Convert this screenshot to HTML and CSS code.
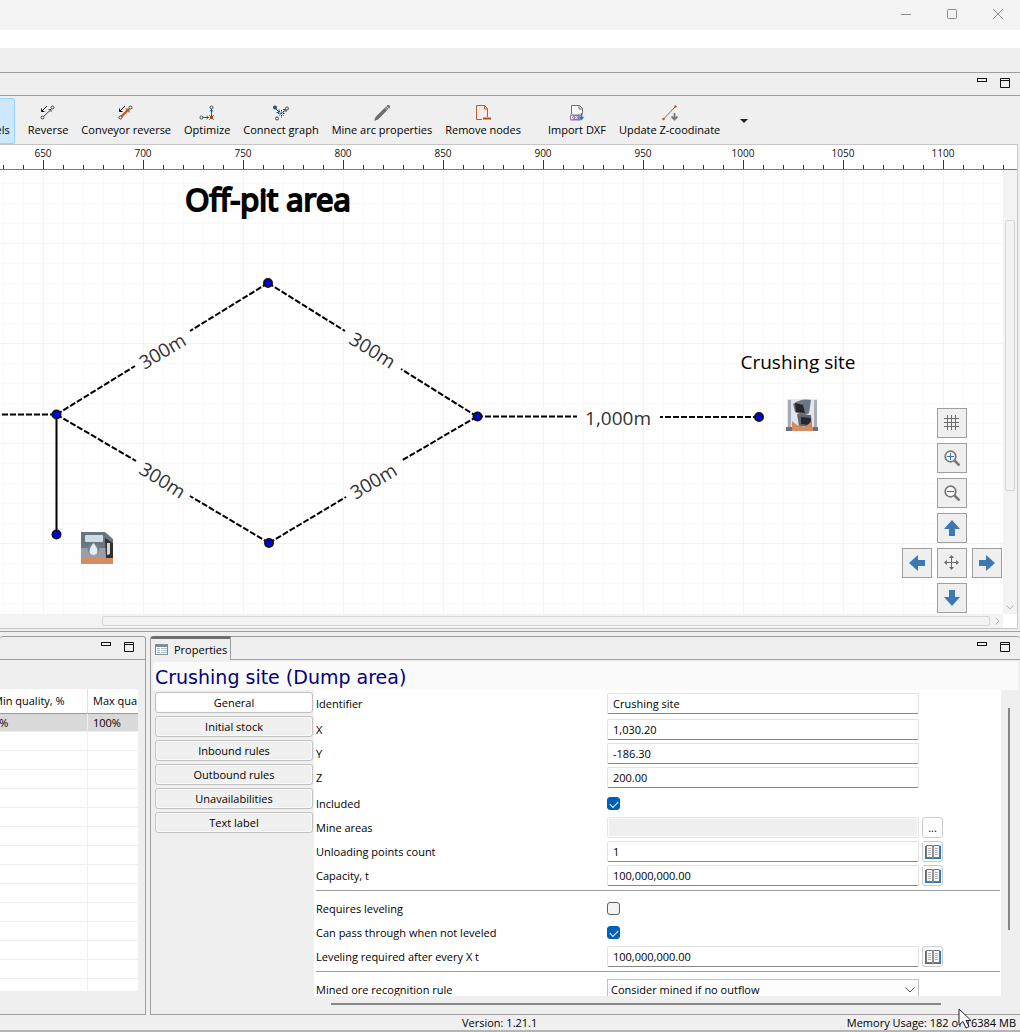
FILE: index.html
```
<!DOCTYPE html>
<html lang="en">
<head>
<meta charset="utf-8">
<title>Mine model editor</title>
<link rel="stylesheet" href="styles.css">
</head>
<body>
<header class="titlebar">
  <button class="win-btn" aria-label="Minimize"><svg width="12" height="12"><path d="M1 6.500h10" /></svg></button>
  <button class="win-btn" aria-label="Maximize"><svg width="12" height="12"><rect x="1.500" y="1.500" width="9" height="9" rx="1"/></svg></button>
  <button class="win-btn" aria-label="Close"><svg width="12" height="12"><path d="M1 1l10 10M11 1L1 11"/></svg></button>
</header>
<div class="menubar"></div>
<div class="coolbar"></div>

<main class="workbench">
<section class="part">
  <div class="part-head">
    <button class="part-btn" aria-label="Minimize view"><svg width="11" height="11"><rect x=".5" y="1.500" width="9" height="3"/></svg></button>
    <button class="part-btn" aria-label="Maximize view"><svg width="11" height="11"><path d="M.5 1.500h9v9h-9zM.5 3.500h9"/></svg></button>
  </div>
  <div class="toolbar">
    <button class="tool tool-on"><svg class="icon" viewBox="0 0 16 16"></svg>Labels</button>
    <button class="tool"><svg class="icon" viewBox="0 0 16 16"><path d="M3.500 11.500L11 4.500M8.500 4.500H11V7" stroke="#1c5586"/><path d="M7 1L1.500 6.500M1.500 3.500v3h3" stroke="#111"/><circle cx="2.500" cy="12.500" r="1.500" fill="#efefef" stroke="#444"/><circle cx="12.500" cy="2.500" r="1.500" fill="#efefef" stroke="#444"/></svg>Reverse</button>
    <button class="tool"><svg class="icon" viewBox="0 0 16 16"><path d="M3.500 11.500L10 5" stroke="#c05a1a" stroke-width="2.400"/><path d="M7 3.500h4.500V8z" fill="#c05a1a"/><path d="M7 1L1.500 6.500M1.500 3.500v3h3" stroke="#111"/><circle cx="2.500" cy="12.500" r="1.500" fill="#efefef" stroke="#444"/><circle cx="12.500" cy="2.500" r="1.500" fill="#efefef" stroke="#444"/></svg>Conveyor reverse</button>
    <button class="tool"><svg class="icon" viewBox="0 0 16 16"><path d="M4 12.500h6M12.500 4v7M11 6.500l1.500-2 1.500 2M7.500 11l2 1.500-2 1.500" stroke="#1c5586"/><path d="M10 10l5 5M15 10l-5 5" stroke="#c05a1a"/><rect x="11" y="11" width="3" height="3" fill="#9c4a18"/><circle cx="2.500" cy="12.500" r="1.500" fill="#efefef" stroke="#444"/><circle cx="12.500" cy="2.500" r="1.500" fill="#efefef" stroke="#444"/></svg>Optimize</button>
    <button class="tool"><svg class="icon" viewBox="0 0 16 16"><circle cx="2" cy="2.500" r="2" fill="#1c5586"/><path d="M3 4l3 3M6 4.500v3H3.500M9.500 8l3-3M10 4.500h3V7" stroke="#1c5586"/><path d="M8.500 5v8M5 8.500h7M6 6l5 5M11 6l-5 5" stroke="#333" stroke-dasharray="1.500 1"/><circle cx="4" cy="13.500" r="1.500" fill="#efefef" stroke="#444"/><circle cx="14" cy="3.500" r="1.500" fill="#efefef" stroke="#444"/></svg>Connect graph</button>
    <button class="tool"><svg class="icon" viewBox="0 0 16 16"><path d="M0 16l1.500-4L12 1.500 14.500 4 4 14.500z" fill="#6b6f72"/><path d="M12.500 1l1-1q1.500-.5 2.500 1t-.5 2l-.5.500z" fill="#6b6f72"/><path d="M11 2.500L13.500 5" stroke="#efefef" stroke-width=".7"/></svg>Mine arc properties</button>
    <button class="tool"><svg class="icon" viewBox="0 0 16 16"><path d="M1.500.5h8l3 3v11h-11z" fill="#f7e9ec" stroke="#b5602f"/><path d="M9.500.5v3.500h3" stroke="#b5602f"/><path d="M7 12h9v3H7z" fill="#efefef"/><path d="M8 13.500h8" stroke="#b5530f" stroke-width="2"/></svg>Remove nodes</button>
    <span class="tool-gap"></span>
    <button class="tool"><svg class="icon" viewBox="0 0 16 16"><path d="M2.500 9V.5h8l3 3V9" fill="#fafafa" stroke="#707070"/><path d="M10 .5V4h3.500" stroke="#707070"/><rect x="1" y="9.500" width="11" height="6" rx="1" fill="#9073a8"/><path d="M2.500 11v3q2 0 2-1.500T2.500 11M6 11l2.500 3M8.500 11L6 14" stroke="#fff" stroke-width=".9"/><path d="M13.500 8v4h2l-3 3.500-3-3.500h2V8z" fill="#2e73b4" stroke="#efefef" stroke-width=".3"/></svg>Import DXF</button>
    <button class="tool"><svg class="icon" viewBox="0 0 16 16"><path d="M1.500 14L13 2" stroke="#777"/><circle cx="1.500" cy="14" r="1.300" fill="#b5602f"/><circle cx="13.500" cy="1.500" r="1.300" fill="#b5602f"/><path d="M12.500 8v6M9.500 11.500l3 3 3-3" stroke="#777" stroke-width="1.800"/></svg>Update Z-coodinate</button>
    <button class="tool-more" aria-label="More tools"><svg width="8" height="5"><path d="M0 0h8L4 4z" fill="#222"/></svg></button>
  </div>

  <div class="editor">
    <svg class="ruler" height="25">
      <defs>
        <pattern id="minor" width="20" height="25" patternUnits="userSpaceOnUse" x="3"><path d="M.5 20v5" stroke="#333"/></pattern>
        <pattern id="major" width="100" height="25" patternUnits="userSpaceOnUse" x="43"><path d="M.5 15v10" stroke="#333"/></pattern>
      </defs>
      <rect width="100%" height="25" fill="url(#minor)"/>
      <rect width="100%" height="25" fill="url(#major)"/>
      <path d="M0 24.500h4000" stroke="#777"/>
      <g class="ruler-text">
        <text x="43" y="12">650</text><text x="143" y="12">700</text><text x="243" y="12">750</text><text x="343" y="12">800</text><text x="443" y="12">850</text><text x="543" y="12">900</text><text x="643" y="12">950</text><text x="743" y="12">1000</text><text x="843" y="12">1050</text><text x="943" y="12">1100</text>
      </g>
    </svg>
    <div class="canvas">
      <svg class="scene">
        <defs>
          <pattern id="grid" width="20" height="20" patternUnits="userSpaceOnUse" x="3" y="13"><path d="M.5 0v20M0 .5h20" stroke="#f9f9f9"/></pattern>
          <pattern id="grid5" width="100" height="100" patternUnits="userSpaceOnUse" x="43" y="73"><path d="M.5 0v100M0 .5h100" stroke="#f3f3f3"/></pattern>
        </defs>
        <rect width="100%" height="100%" fill="url(#grid)"/>
        <rect width="100%" height="100%" fill="url(#grid5)"/>
        <g transform="translate(0 -170)">
          <path class="arc" d="M56 414.500H-8M56.500 414.500L135 366M268 283L190 331M268 283L345 331M477 416.500L401 369M56.500 414.500L136 461M269 543L190 496M269 543L346 497M477 416.500L401 461M477 416.500H577M759 417H660"/>
          <path class="arc solid" d="M56.500 414V534"/>
          <g class="node"><circle cx="56.500" cy="414.500" r="4"/><circle cx="268" cy="283" r="4"/><circle cx="477.500" cy="416.500" r="4"/><circle cx="269" cy="543" r="4"/><circle cx="56.500" cy="534.500" r="4"/><circle cx="759" cy="417" r="4"/></g>
          <g class="arc-text">
            <text transform="translate(166 357) rotate(-31)">300m</text>
            <text transform="translate(369 356) rotate(32)">300m</text>
            <text transform="translate(159 486) rotate(32)">300m</text>
            <text transform="translate(377 487) rotate(-31)">300m</text>
            <text x="618" y="425">1,000m</text>
          </g>
          <text class="area-title" x="268" y="211">Off-pit area</text>
          <text class="site-title" x="798" y="369">Crushing site</text>
          <g transform="translate(81 532)">
            <path d="M0 0h24l8 7v19H0z" fill="#69757f"/><path d="M0 16h25v10H0z" fill="#989fa6"/><path d="M0 26h32v6H0z" fill="#d58c62"/>
            <rect x="4" y="3" width="18" height="7" rx="1" fill="#cfdbe6"/><circle cx="12.500" cy="17" r="6" fill="#75818b"/><path d="M12.500 11q4 5 4 8a4 4 0 0 1-8 0q0-3 4-8z" fill="#e2eef5"/>
            <path d="M24 6l8 5v15h-7z" fill="#34302f"/><path d="M26 11h3v11l-3 1z" fill="#d8d8d8"/><path d="M25 0h7v5z" fill="#fefefe"/>
          </g>
          <g transform="translate(786 399)">
            <path d="M1 0h30v32H1z" fill="#e3e6ea"/><path d="M2 1h3v29H2zM28 1h3v29h-3z" fill="#a5aeb8"/>
            <path d="M7 5q8-6 18-4l-2 13-6 3-8-4z" fill="#6b7683"/><path d="M9 4l8 2 2 8-9-1z" fill="#26262a"/><path d="M11 15l14 1 1 12-13-1z" fill="#5d6873"/><path d="M15 18l10 1-1 7-9-1z" fill="#28262a"/>
            <path d="M6 22l5 4 8 2 6-5 3 9H6z" fill="#d58c62"/><path d="M0 28h6v4H0zM27 28h5v4h-5z" fill="#68727d"/>
          </g>
        </g>
      </svg>
      <div class="nav">
        <button class="nav-btn n-mid" aria-label="Grid"><svg width="16" height="16"><path d="M3.500 0v15M7.500 0v15M11.500 0v15M0 3.500h15M0 7.500h15M0 11.500h15" stroke="#6c6c6c"/></svg></button>
        <button class="nav-btn n-mid" aria-label="Zoom in"><svg width="16" height="16"><circle cx="6.500" cy="6.500" r="5.300" fill="#fafafa" stroke="#777" stroke-width="1.700"/><path d="M10.500 10.500l5 5" stroke="#777" stroke-width="2.500"/><path d="M6.500 3v7M3 6.500h7" stroke="#2e73b4"/></svg></button>
        <button class="nav-btn n-mid" aria-label="Zoom out"><svg width="16" height="16"><circle cx="6.500" cy="6.500" r="5.300" fill="#fafafa" stroke="#777" stroke-width="1.700"/><path d="M10.500 10.500l5 5" stroke="#777" stroke-width="2.500"/><path d="M3 6.500h7" stroke="#2e73b4"/></svg></button>
        <button class="nav-btn n-mid" aria-label="Up"><svg width="16" height="16"><path d="M8 0l8 9h-5v7H5V9H0z" fill="#3c78b4"/></svg></button>
        <button class="nav-btn n-left" aria-label="Left"><svg width="16" height="16"><path d="M0 8l9-8v5h7v6H9v5z" fill="#3c78b4"/></svg></button>
        <button class="nav-btn" aria-label="Fit"><svg width="16" height="16"><path d="M7.500 2v11M2 7.500h11" stroke="#6c6c6c"/><path d="M7.500 0L10 3H5zM7.500 15L10 12H5zM0 7.500L3 5v5zM15 7.500L12 5v5z" fill="#6c6c6c"/></svg></button>
        <button class="nav-btn" aria-label="Right"><svg width="16" height="16"><path d="M16 8L7 0v5H0v6h7v5z" fill="#3c78b4"/></svg></button>
        <button class="nav-btn n-mid" aria-label="Down"><svg width="16" height="16"><path d="M8 16l8-9h-5V0H5v7H0z" fill="#3c78b4"/></svg></button>
      </div>
    </div>
    <div class="vbar"><div class="vthumb"></div><svg width="8" height="5"><path d="M.5.5L4 4 7.500.5"/></svg></div>
    <div class="hbar"><div class="hthumb"></div><svg width="5" height="8"><path d="M.5.5L4 4 .5 7.500"/></svg></div>
  </div>
</section>

<div class="lower">
  <section class="pane table-pane">
    <div class="pane-head">
      <button class="part-btn" aria-label="Minimize view"><svg width="11" height="11"><rect x=".5" y="1.500" width="9" height="3"/></svg></button>
      <button class="part-btn" aria-label="Maximize view"><svg width="11" height="11"><path d="M.5 1.500h9v9h-9zM.5 3.500h9"/></svg></button>
    </div>
    <div class="table-clip">
      <table class="quality">
        <thead><tr><th>Min quality, %</th><th>Max quality, %</th></tr></thead>
        <tbody>
          <tr class="picked"><td>0%</td><td>100%</td></tr>
          <tr><td></td><td></td></tr><tr><td></td><td></td></tr><tr><td></td><td></td></tr><tr><td></td><td></td></tr><tr><td></td><td></td></tr>
          <tr><td></td><td></td></tr><tr><td></td><td></td></tr><tr><td></td><td></td></tr><tr><td></td><td></td></tr><tr><td></td><td></td></tr>
          <tr><td></td><td></td></tr><tr><td></td><td></td></tr><tr><td></td><td></td></tr><tr><td></td><td></td></tr>
        </tbody>
      </table>
    </div>
  </section>

  <section class="pane props">
    <div class="pane-head">
      <div class="tab"><svg width="14" height="12"><rect x=".5" y=".5" width="12" height="10" fill="#fff" stroke="#7d8b99"/><path d="M1 2h12" stroke="#7d8b99" stroke-width="2"/><path d="M2 4.500h3M2 6.500h3M2 8.500h3" stroke="#9db4c4"/><path d="M6 4.500h6M6 6.500h6M6 8.500h6" stroke="#aabecb"/></svg>Properties</div>
      <button class="part-btn" aria-label="Minimize view"><svg width="11" height="11"><rect x=".5" y="1.500" width="9" height="3"/></svg></button>
      <button class="part-btn" aria-label="Maximize view"><svg width="11" height="11"><path d="M.5 1.500h9v9h-9zM.5 3.500h9"/></svg></button>
    </div>
    <h1 class="props-title">Crushing site (Dump area)</h1>
    <div class="props-body">
      <nav class="sections">
        <button class="section-btn section-on">General</button>
        <button class="section-btn">Initial stock</button>
        <button class="section-btn">Inbound rules</button>
        <button class="section-btn">Outbound rules</button>
        <button class="section-btn">Unavailabilities</button>
        <button class="section-btn">Text label</button>
      </nav>
      <form class="form">
        <div class="row"><label for="ident">Identifier</label><input class="field" id="ident" type="text" value="Crushing site"></div>
        <div class="row row-group"><label for="fx">X</label><input class="field" id="fx" type="text" value="1,030.20"></div>
        <div class="row"><label for="fy">Y</label><input class="field" id="fy" type="text" value="-186.30"></div>
        <div class="row"><label for="fz">Z</label><input class="field" id="fz" type="text" value="200.00"></div>
        <div class="row row-group"><label for="incl">Included</label><input class="check" id="incl" type="checkbox" checked></div>
        <div class="row"><label for="areas">Mine areas</label><input class="field" id="areas" type="text" disabled><button class="side-btn" type="button">...</button></div>
        <div class="row"><label for="points">Unloading points count</label><input class="field" id="points" type="text" value="1"><button class="side-btn" type="button" aria-label="Schedule"><svg class="book" viewBox="0 0 16 16"><use href="#book"/></svg></button></div>
        <div class="row"><label for="cap">Capacity, t</label><input class="field" id="cap" type="text" value="100,000,000.00"><button class="side-btn" type="button" aria-label="Schedule"><svg class="book" viewBox="0 0 16 16"><use href="#book"/></svg></button></div>
        <hr class="rule">
        <div class="row"><label for="lev">Requires leveling</label><input class="check" id="lev" type="checkbox"></div>
        <div class="row"><label for="pass">Can pass through when not leveled</label><input class="check" id="pass" type="checkbox" checked></div>
        <div class="row"><label for="every">Leveling required after every X t</label><input class="field" id="every" type="text" value="100,000,000.00"><button class="side-btn" type="button" aria-label="Schedule"><svg class="book" viewBox="0 0 16 16"><g id="book"><path d="M0 2h16v13H0z" fill="#2e73b4"/><path d="M1.500 1.500h6v12h-6zM8.500 1.500h6v12h-6z" fill="#f6f6f6" stroke="#777"/><path d="M8 1.500v14" stroke="#999" stroke-width="1.500"/><path d="M3 4.500h3M3 6.500h3M3 8.500h3M3 10.500h3M10 4.500h3M10 6.500h3M10 8.500h3M10 10.500h3" stroke="#b0b0b0"/></g></svg></button></div>
        <hr class="rule">
        <div class="row"><label for="rule">Mined ore recognition rule</label><div class="select-wrap"><select id="rule"><option>Consider mined if no outflow</option></select><svg width="10" height="6"><path d="M.5.5L5 5 9.500.5" fill="none" stroke="#555"/></svg></div></div>
      </form>
      <div class="side-scroll"><div class="side-thumb"></div></div>
    </div>
    <div class="bottom-scroll"><div class="bottom-thumb"></div></div>
  </section>
</div>
</main>

<footer class="status"><span class="version">Version: 1.21.1</span><span class="memory">Memory Usage: 182 of 16384 MB</span>
  <svg class="pointer" width="14" height="22"><path d="M1 1v16l4-3.500 3 6.500 3-1.500-3-6h5z" fill="#fff" stroke="#222"/></svg>
</footer>
</body>
</html>
```
FILE: styles.css
```
* { box-sizing: border-box; }
body {
  margin: 0;
  min-height: 100vh;
  display: flex;
  flex-direction: column;
  background: #efefef;
  color: #000;
  font: 11px/16px "Open Sans", "Noto Sans", sans-serif;
  overflow-x: hidden;
}
button, input, select { font: inherit; color: inherit; margin: 0; }
button { padding: 0; border: 0; background: none; }
svg { display: block; fill: none; }

/* window frame */
.titlebar { height: 30px; background: #f3f3f3; display: flex; justify-content: flex-end; padding-right: 16px; gap: 34px; }
.win-btn { width: 12px; height: 28px; stroke: #8a8a8a; display: flex; align-items: center; }
.menubar { height: 18px; background: #fefefe; }
.coolbar { height: 24px; }
.workbench { flex: 1; display: flex; flex-direction: column; }

/* editor part */
.part { flex: 1; display: flex; flex-direction: column; border-top: 1px solid #9f9f9f; border-bottom: 1px solid #9f9f9f; padding-bottom: 2px; }
.part-head { height: 23px; border-bottom: 1px solid #9f9f9f; display: flex; justify-content: flex-end; gap: 12px; padding: 4px 9px 0 0; }
.part-btn { width: 11px; height: 11px; stroke: #111; }

.toolbar { height: 48px; display: flex; align-items: flex-start; gap: 1px; padding-top: 2px; overflow: hidden; }
.tool { height: 46px; padding: 7px 6px 0; display: flex; flex-direction: column; align-items: center; gap: 1px; white-space: nowrap; flex: none; }
.tool-on { background: #cce8ff; border: 1px solid #99d1ff; border-radius: 2px; margin-left: -28px; margin-right: 6px; padding: 6px 4px 0; }
.icon { width: 16px; height: 16px; }
.tool-gap { width: 13px; }
.tool-more { margin: 21px 0 0 13px; }

.editor { flex: 1; min-height: 300px; margin-right: 2px; border: 1px solid #c6c6c6; border-left: 0; display: grid; grid-template-columns: 1fr 14px; grid-template-rows: 25px 1fr 14px; background: #fff; }
.ruler { grid-column: 1 / 3; width: 100%; }
.ruler-text { font-size: 10px; text-anchor: middle; fill: #111; }
.canvas { position: relative; background: #fefefe; min-height: 0; }
.scene { position: absolute; width: 100%; height: 100%; }
.arc { stroke: #000; stroke-width: 2; stroke-dasharray: 6 2; }
.solid { stroke-dasharray: none; }
.node { fill: #0000f0; stroke: #111; stroke-width: 2; }
.arc-text { font-size: 19px; fill: #333; text-anchor: middle; }
.area-title { font-size: 31px; fill: #000; stroke: #000; stroke-width: 2; text-anchor: middle; }
.site-title { font-size: 19px; fill: #000; text-anchor: middle; }
.nav { position: absolute; right: 1px; bottom: 1px; display: grid; grid-template-columns: repeat(3, 30px); gap: 5px; }
.nav-btn { width: 30px; height: 30px; border: 1px solid #9f9f9f; background: #efefef; display: flex; align-items: center; justify-content: center; }
.n-mid { grid-column: 2; }
.n-left { grid-column: 1; }
.vbar { background: #f3f3f3; display: flex; flex-direction: column; align-items: center; padding: 50px 1px 4px; stroke: #b5b5b5; }
.vthumb { width: 10px; flex: 0 0 271px; border: 1px solid #d6d6d6; border-radius: 2px; background: #f3f3f3; margin-bottom: auto; }
.hbar { background: #f3f3f3; display: flex; align-items: center; padding: 0 3px 0 102px; gap: 5px; stroke: #b5b5b5; }
.hthumb { height: 10px; flex: 1; border: 1px solid #d6d6d6; border-radius: 2px; }

/* lower panes */
.lower { display: flex; gap: 4px; padding-top: 4px; }
.pane { border: 1px solid #9f9f9f; border-radius: 3px 3px 0 0; height: 379px; display: flex; flex-direction: column; }
.table-pane { flex: 0 0 146px; min-width: 0; width: 146px; border-left: 0; }
.pane-head { flex: 0 0 23px; border-bottom: 1px solid #9f9f9f; display: flex; justify-content: flex-end; gap: 12px; padding: 4px 10px 0 0; }
.table-clip { margin: 29px 7px 0 0; height: 302px; overflow: hidden; background: #fff; }
.quality { width: 200px; margin-left: -12px; table-layout: fixed; border-collapse: separate; border-spacing: 0; }
.quality th { height: 25px; padding: 0 5px; font-weight: 400; text-align: left; border-bottom: 1px solid #999; border-right: 1px solid #e2e2e2; }
.quality td { height: 19px; padding: 0 5px; line-height: 17px; border-bottom: 1px solid #efefef; border-right: 1px solid #efefef; }
.quality .picked td { height: 18px; background: #d9d9d9; }

.props { flex: 1; border-right: 0; min-width: 0; }
.props .pane-head { padding: 4px 9px 0 0; }
.tab { margin: -5px auto -1px 0; height: 24px; width: 80px; border-top: 3px solid #6e6e6e; border-right: 1px solid #9f9f9f; border-radius: 3px 0 0 0; background: #efefef; display: flex; align-items: center; gap: 5px; padding: 0 0 0 4px; }
.props-title { margin: 2px 2px 0; height: 28px; padding: 0 2px; background: #fafafa; color: #000080; font: 19px/30px "DejaVu Sans", sans-serif; white-space: nowrap; }
.props-body { display: flex; margin-right: 2px; height: 306px; }
.sections { flex: 0 0 163px; padding: 2px 1px 0 4px; display: flex; flex-direction: column; gap: 3px; }
.section-btn { height: 21px; border: 1px solid #c2c2c2; border-radius: 3px; background: #f0f0f0; box-shadow: inset 0 0 0 1px #fafafa; }
.section-on { background: #fff; }
.form { flex: 1; background: #fff; padding: 3px 1px 0 2px; display: flex; flex-direction: column; gap: 3px; overflow: hidden; min-width: 0; }
.row { flex: 0 0 21px; display: grid; grid-template-columns: 288px minmax(100px, 312px) 21px; column-gap: 3px; align-items: center; margin-right: 57px; }
.row label { white-space: nowrap; }
.row-group { margin-top: 2px; }
.field { width: 100%; height: 21px; padding: 0 5px; border: 1px solid #e2e2e2; border-bottom-color: #868686; border-radius: 2px; background: #fff; }
.field:disabled { background: #efefef; border-color: #e6e6e6; box-shadow: inset 0 0 0 1px #fafafa; }
.check { appearance: none; width: 13px; height: 13px; border: 1px solid #606060; border-radius: 3px; background: #f4f4f4; display: flex; justify-content: center; }
.check:checked { background: #005fb8; border-color: #005fb8; }
.check:checked::after { content: ""; width: 7px; height: 4px; margin-top: 3px; border: solid #fff; border-width: 0 0 1px 1px; transform: rotate(-45deg); }
.side-btn { width: 21px; height: 21px; border: 1px solid #ccc; border-radius: 3px; background: #fdfdfd; display: flex; align-items: center; justify-content: center; }
.book { width: 16px; height: 16px; }
.rule { flex: 0 0 6px; width: 100%; margin: 0; border: 0; background: linear-gradient(#9f9f9f, #9f9f9f) 0 1px / 100% 1px no-repeat; }
.select-wrap { display: grid; align-items: center; }
.select-wrap select, .select-wrap svg { grid-area: 1 / 1; }
.select-wrap svg { justify-self: end; margin-right: 4px; pointer-events: none; }
.select-wrap select { appearance: none; width: 100%; height: 22px; padding: 0 3px; border: 1px solid #bfc3c7; border-radius: 0; background: #fdfdfd; }
.side-scroll { flex: 0 0 17px; padding: 18px 0 0 7px; }
.side-thumb { width: 2px; height: 222px; background: #868686; }
.bottom-scroll { padding: 7px 79px 0 180px; }
.bottom-thumb { height: 2px; background: #868686; }

.status { position: relative; height: 17px; border-bottom: 2px solid #b5b5b5; display: flex; justify-content: space-between; padding: 0 4px 0 462px; line-height: 15px; }
.pointer { position: absolute; right: 48px; top: -7px; }
```
